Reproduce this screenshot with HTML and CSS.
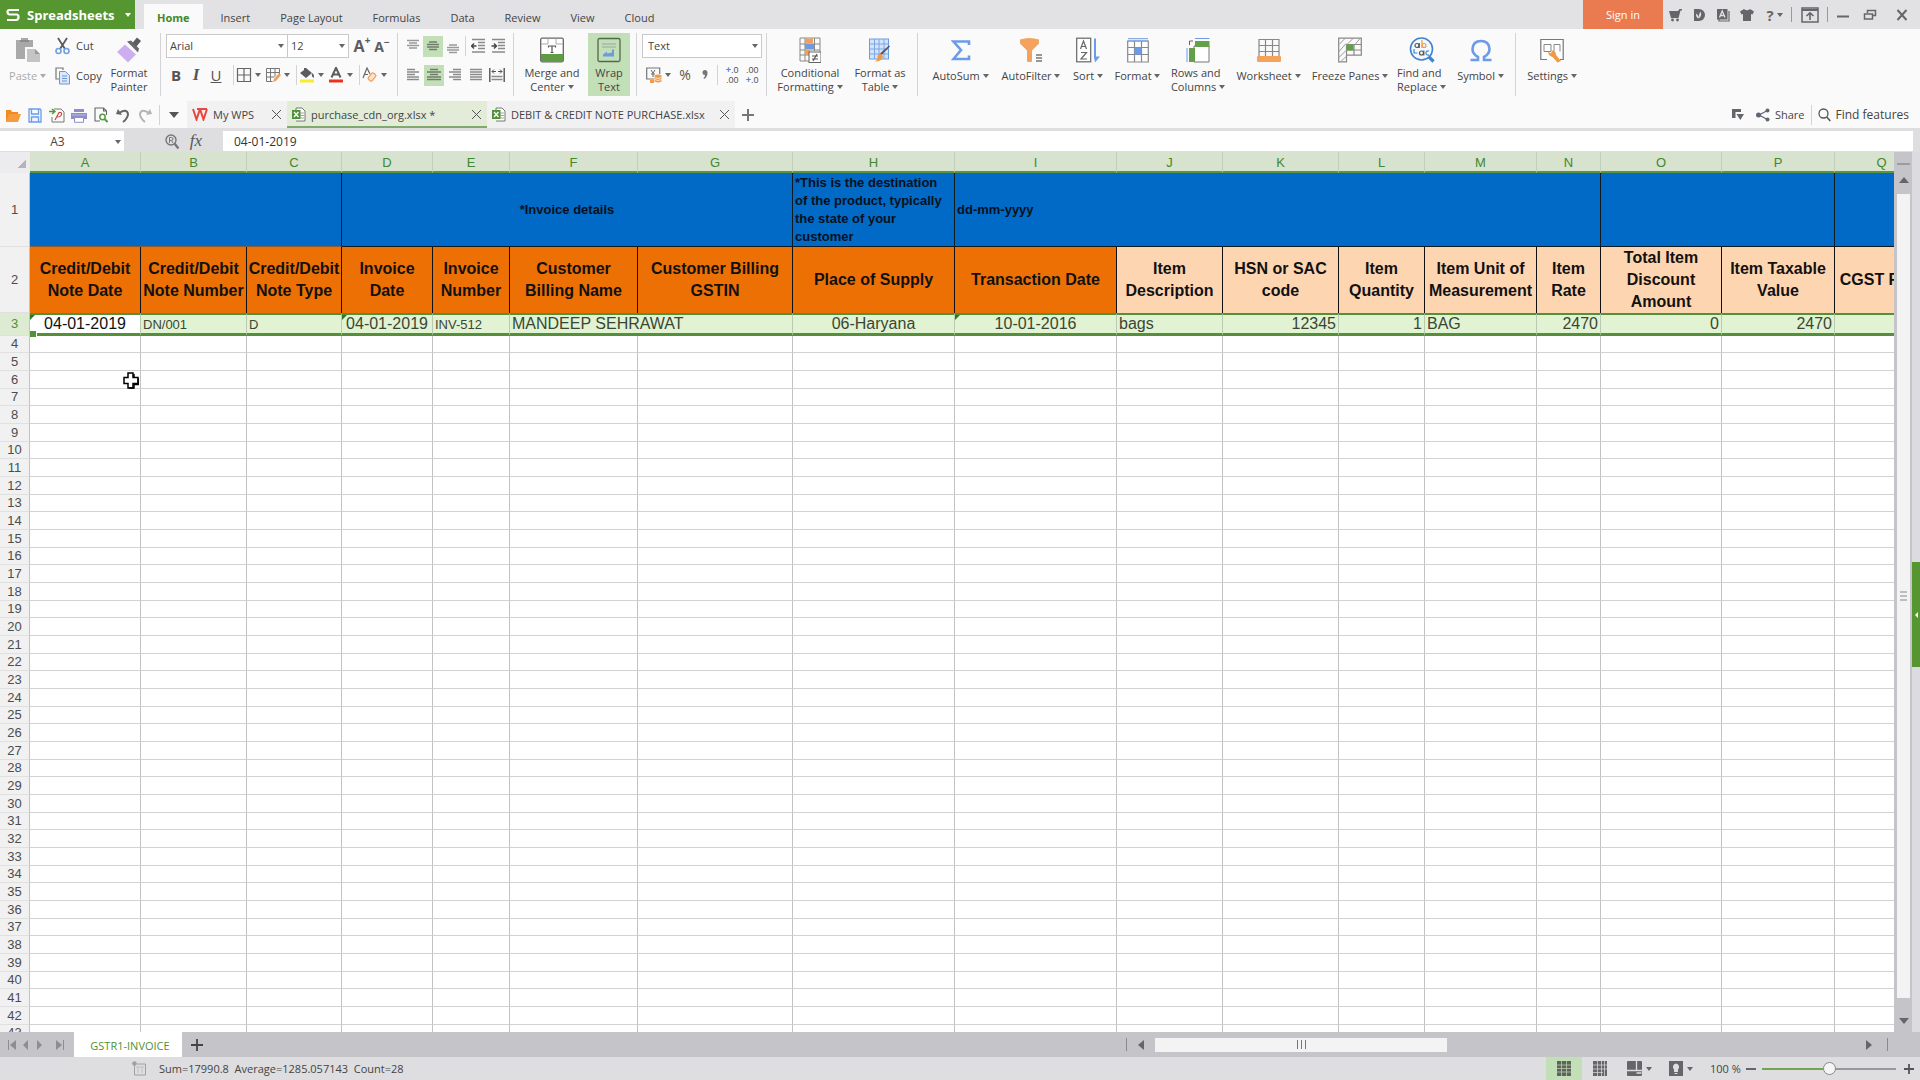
FILE: index.html
```html
<!DOCTYPE html>
<html lang="en">
<head>
<meta charset="utf-8">
<title>purchase_cdn_org.xlsx - Spreadsheets</title>
<link rel="stylesheet" href="styles.css">
</head>
<body>
<header class="titlebar">
  <button class="app-menu"><svg width="14" height="14" viewBox="0 0 14 14"><path d="M13 2H3.500Q1.500 2 1.500 4T3.500 6.500H10.500Q12.500 6.500 12.500 9T10.500 12H1" fill="none" stroke="#fff" stroke-width="2.200"/></svg><span>Spreadsheets</span><i class="caret"></i></button>
  <nav class="menu">
    <button class="menu-tab active">Home</button><button class="menu-tab">Insert</button><button class="menu-tab">Page Layout</button><button class="menu-tab">Formulas</button><button class="menu-tab">Data</button><button class="menu-tab">Review</button><button class="menu-tab">View</button><button class="menu-tab">Cloud</button>
  </nav>
  <div class="window-tools">
    <button class="signin">Sign in</button>
    <button class="wt" aria-label="Store"><svg width="14" height="14" viewBox="0 0 14 14" fill="#66666a"><path d="M1 3h9l1.500-2H14v1.500h-1.500L10.500 10H3z"/><circle cx="4.500" cy="12" r="1.400"/><circle cx="9.500" cy="12" r="1.400"/></svg></button>
    <button class="wt" aria-label="Docer"><svg width="14" height="14" viewBox="0 0 14 14"><path d="M2 1h5a6 6 0 0 1 0 12H2z" fill="#66666a"/><path d="M6.500 10.500C3.500 9 4 6 4.500 5.500Q6.500 7 6.500 10.500C7 8 7 5 8.500 3.500Q10.500 8 6.500 10.500" fill="#e2e2e4"/></svg></button>
    <button class="wt" aria-label="Templates"><svg width="14" height="14" viewBox="0 0 14 14"><path d="M3 3v10h10V3" fill="none" stroke="#66666a" stroke-width="1.200"/><rect x="1" y="1" width="10.500" height="10.500" fill="#66666a"/><path d="M3.500 9.500L6.200 3l2.800 6.500M4.500 7.500h3.500" stroke="#e2e2e4" stroke-width="1.300" fill="none"/></svg></button>
    <button class="wt" aria-label="Skins"><svg width="14" height="14" viewBox="0 0 14 14" fill="#66666a"><path d="M4 1q3 2.500 6 0l4 2.500-1.500 3L11 6v7H3V6l-1.500.5L0 3.500z"/></svg></button>
    <button class="wt help" aria-label="Help"><b>?</b><i class="caret"></i></button>
    <i class="tsep"></i>
    <button class="wt wide" aria-label="Hide ribbon"><svg width="18" height="16" viewBox="0 0 18 16"><rect x="1" y="1" width="16" height="14" fill="none" stroke="#66666a" stroke-width="1.500"/><path d="M1 3h16" stroke="#66666a" stroke-width="2"/><path d="M9 13V6M5.500 9L9 5.800 12.500 9" fill="none" stroke="#66666a" stroke-width="1.600"/></svg></button>
    <i class="tsep"></i>
    <button class="wt win" aria-label="Minimize"><svg width="14" height="14" viewBox="0 0 14 14"><path d="M1 8.500h12" stroke="#66666a" stroke-width="2"/></svg></button>
    <button class="wt win" aria-label="Restore"><svg width="14" height="14" viewBox="0 0 14 14"><path d="M4.500 5V2.500h8v5H10" fill="none" stroke="#66666a" stroke-width="1.500"/><rect x="1.500" y="6" width="8" height="5" fill="none" stroke="#66666a" stroke-width="1.500"/></svg></button>
    <button class="wt win last" aria-label="Close"><svg width="12" height="12" viewBox="0 0 12 12"><path d="M1.500 1l9 10M10.500 1l-9 10" stroke="#66666a" stroke-width="2"/></svg></button>
  </div>
</header>

<section class="ribbon" aria-label="Home ribbon">
  <div class="group clip">
    <button class="big single w-paste off"><svg width="26" height="26" viewBox="0 0 26 26"><path d="M1 3h5V1h7v2h5v7H10v12H1z" fill="#a9a9a9"/><path d="M5 4h9" stroke="#8c8c8c" stroke-width="2"/><path d="M12 12h8l5 5v8H12z" fill="#c4c4c4"/><path d="M20 12v5h5" fill="#9a9a9a"/></svg><span>Paste <i class="caret"></i></span></button>
    <div class="pair">
      <button><svg width="15" height="18" viewBox="0 0 15 18"><path d="M3 1l7 11M12 1L5 12" stroke="#5a5a5e" stroke-width="1.800"/><circle cx="3.500" cy="14" r="2.500" fill="none" stroke="#6fa0e0" stroke-width="1.600"/><circle cx="11.500" cy="14" r="2.500" fill="none" stroke="#6fa0e0" stroke-width="1.600"/></svg><span>Cut</span></button>
      <button><svg width="15" height="18" viewBox="0 0 15 18"><path d="M4 12H1V1h7v2" fill="none" stroke="#777" stroke-width="1.200"/><path d="M4.500 4.500h6l4 4V17h-10z" fill="#dce8fa" stroke="#6b96d8"/><path d="M7 9h5M7 11.500h5M7 14h5" stroke="#6b96d8" stroke-width="1.200"/></svg><span>Copy</span></button>
    </div>
    <button class="big w-painter"><svg width="24" height="25" viewBox="0 0 24 25"><path d="M15 6l5-6 4 3.500-5 6z" fill="#5c5c60"/><path d="M10 4l4-1 8 8-1 4z" fill="#68686c"/><path d="M8 7l11 10-8 8Q5 19 0 14.500z" fill="#cdaef0"/></svg><span>Format<br>Painter</span></button>
  </div>
  <div class="group font">
    <div class="line">
      <label class="combo family"><select aria-label="Font"><option>Arial</option></select><i class="caret"></i></label><label class="combo size"><select aria-label="Font size"><option>12</option></select><i class="caret"></i></label>
      <button class="grow" aria-label="Increase font size">A<sup>+</sup></button><button class="grow small" aria-label="Decrease font size">A<sup>−</sup></button>
    </div>
    <div class="line">
      <button class="ib"><b>B</b></button><button class="ib"><em>I</em></button><button class="ib"><u>U</u></button><i class="sep first"></i>
      <button class="ic" aria-label="Borders"><svg width="16" height="16" viewBox="0 0 16 16"><path d="M1.500 1.500h13v13h-13zM8 1.500v13M1.500 8h13" fill="none" stroke="#666" stroke-width="1.200"/></svg><i class="caret"></i></button>
      <button class="ic" aria-label="Draw borders"><svg width="16" height="16" viewBox="0 0 16 16"><path d="M1.500 14.500v-13h13v6M5.500 1.500v13M10 1.500v8M1.500 5.500h13M1.500 10h8M1.500 14.500h6" fill="none" stroke="#777"/><path d="M8 15l1-3 5-6 2 2-5 6z" fill="#f0a05a"/></svg><i class="caret"></i></button><i class="sep"></i>
      <button class="ic" aria-label="Fill color"><svg width="16" height="16" viewBox="0 0 16 16"><path d="M5 4V1h2l6 5-6 5-6-5 4-3" fill="#5c5c60"/><path d="M13 6q3 2 1.500 5Q12 9 13 6" fill="#5c5c60"/><rect x="1" y="12.500" width="14" height="3" fill="#f7ec2f"/></svg><i class="caret"></i></button>
      <button class="ic" aria-label="Font color"><svg width="16" height="16" viewBox="0 0 16 16"><path d="M3.500 10.500L8 .8l4.500 9.700M5 7.500h6" fill="none" stroke="#5c5c60" stroke-width="2"/><rect x="1" y="12.500" width="14" height="3" fill="#ea3223"/></svg><i class="caret"></i></button><i class="sep"></i>
      <button class="ic" aria-label="Clear"><svg width="16" height="16" viewBox="0 0 16 16"><path d="M1 11L5 1l3 6M2.500 7.500H6" fill="none" stroke="#666" stroke-width="1.200"/><rect x="-2.500" y="-4" width="5" height="8" rx="1.500" transform="translate(10 10) rotate(40)" fill="#fbe3cc" stroke="#f0a05a" stroke-width="1.200"/></svg><i class="caret"></i></button>
    </div>
  </div>
  <div class="group align">
    <div class="line">
      <button class="ib" aria-label="Top"><svg width="12" height="16" viewBox="0 0 12 16"><path d="M0 2.500h12M2 5h8M0 7.500h12M2 10h8" stroke="#9a9a9e" stroke-width="1.600"/></svg></button><button class="ib on" aria-label="Middle"><svg width="12" height="16" viewBox="0 0 12 16"><path d="M2 4h8M0 6.500h12M0 9h12M2 11.500h8" stroke="#6f7d6a" stroke-width="1.600"/></svg></button><button class="ib" aria-label="Bottom"><svg width="12" height="16" viewBox="0 0 12 16"><path d="M2 7h8M0 9.500h12M0 12h12M2 14.500h8" stroke="#9a9a9e" stroke-width="1.600"/></svg></button><i class="sep"></i><button class="ib" aria-label="Decrease indent"><svg width="14" height="16" viewBox="0 0 14 16"><path d="M1 1.500h13M7 4.500h7M7 7.500h7M7 10.500h7M1 14h13" stroke="#8a8a8e" stroke-width="1.400"/><path d="M3 5.500L.5 8 3 10.500M.5 8h5" fill="none" stroke="#444" stroke-width="1.400"/></svg></button><button class="ib" aria-label="Increase indent"><svg width="14" height="16" viewBox="0 0 14 16"><path d="M1 1.500h13M7 4.500h7M7 7.500h7M7 10.500h7M1 14h13" stroke="#8a8a8e" stroke-width="1.400"/><path d="M3 5.500L5.500 8 3 10.500M5.500 8h-5" fill="none" stroke="#444" stroke-width="1.400"/></svg></button>
    </div>
    <div class="line spaced">
      <button class="ib" aria-label="Left"><svg width="12" height="14" viewBox="0 0 12 14"><path d="M0 1.500h8M0 4h12M0 6.500h8M0 9h12M0 11.500h12" stroke="#8a8a8e" stroke-width="1.400"/></svg></button><button class="ib on" aria-label="Center"><svg width="14" height="14" viewBox="0 0 14 14"><path d="M3 1.500h8M0 4h14M3 6.500h8M0 9h14M0 11.500h14" stroke="#6f7d6a" stroke-width="1.400"/></svg></button><button class="ib" aria-label="Right"><svg width="12" height="14" viewBox="0 0 12 14"><path d="M4 1.500h8M0 4h12M4 6.500h8M0 9h12M4 11.500h8" stroke="#8a8a8e" stroke-width="1.400"/></svg></button><button class="ib" aria-label="Justify"><svg width="12" height="14" viewBox="0 0 12 14"><path d="M0 1.500h12M0 4h12M0 6.500h12M0 9h12M0 11.500h12" stroke="#8a8a8e" stroke-width="1.400"/></svg></button><button class="ib" aria-label="Distribute"><svg width="16" height="14" viewBox="0 0 16 14"><path d="M.8 0v14M15.200 0v14" stroke="#555" stroke-width="1.400"/><path d="M3 3.500h4M9 3.500h4M5 1.500L3 3.500l2 2M11 1.500l2 2-2 2" fill="none" stroke="#555"/><path d="M2.500 8.500h11M2.500 11.500h11" stroke="#8a8a8e" stroke-width="1.400"/></svg></button>
    </div>
  </div>
  <div class="group merge">
    <button class="big w-merge"><svg width="24" height="25" viewBox="0 0 24 25"><rect x=".7" y=".7" width="22.600" height="23.600" rx="1.500" fill="#fff" stroke="#666" stroke-width="1.300"/><path d="M1 6.500h7M16 6.500h7M8 1v5.500M16 1v5.500" stroke="#aaa"/><path d="M8.500 10V8.500h7V10M12 8.500v6.500M10.500 15h3" fill="none" stroke="#555" stroke-width="1.200"/><rect x="1" y="16.500" width="22" height="7.500" fill="#5f9a45"/></svg><span>Merge and<br>Center <i class="caret"></i></span></button>
    <button class="big w-wrap on"><svg width="24" height="25" viewBox="0 0 24 25"><rect x="1" y="1" width="22" height="23" rx="1.500" fill="none" stroke="#4f6a4b" stroke-width="1.300"/><path d="M5 6.500h14M5 9.500h14" stroke="#9aa898" stroke-width="1.200"/><path d="M6 19v-2l4-3v2l5-1v-3h2v7z" fill="#6c9ce0"/></svg><span>Wrap<br>Text</span></button>
  </div>
  <div class="group number">
    <div class="line"><label class="combo format"><select aria-label="Number format"><option>Text</option></select><i class="caret"></i></label></div>
    <div class="line">
      <button class="ic money" aria-label="Currency"><svg width="16" height="17" viewBox="0 0 16 17"><path d="M8 12H.7V1h13v6" fill="none" stroke="#777" stroke-width="1.200"/><path d="M5 3l2 3 2-3M7 6v4M5 7h4" fill="none" stroke="#666"/><path d="M8.500 8.500q3.500-2 7 0v6q-3.500 2-7 0zM4 13h4v3H4z" fill="#f19a45"/><path d="M8.500 10.500q3.500 2 7 0M8.500 12.500q3.500 2 7 0" fill="none" stroke="#fff" stroke-width=".7"/></svg><i class="caret"></i></button><button class="ib pct">%</button><button class="ib" aria-label="Comma style"><svg width="6" height="10" viewBox="0 0 6 10"><path d="M3 0a2.500 2.500 0 0 1 2.500 3Q5.500 7 2 9l-.5-1Q3 7 3 5A2.500 2.500 0 0 1 3 0" fill="#77777b"/></svg></button><i class="sep"></i><button class="ib dec"><span><i>+</i>.0</span><span>.00</span></button><button class="ib dec"><span>.00</span><span><i>+</i>.0</span></button>
    </div>
  </div>
  <div class="group styles">
    <button class="big w-cond"><svg width="22" height="26" viewBox="0 0 22 26"><path d="M1 24V1h20v14M1 7h20M1 13h20M1 18h9M6 1v23M15.500 1v13M1 24h9" fill="none" stroke="#888"/><rect x="6" y="1.500" width="8" height="5" fill="#f0a05a"/><rect x="6" y="7" width="9" height="5" fill="#6c9ce0"/><rect x="6" y="13" width="5" height="5" fill="#f0a05a"/><rect x="10" y="15" width="12" height="10.500" fill="#fff" stroke="#666"/><path d="M13 19h6M13 22h6M18 17l-4 7" stroke="#555" stroke-width="1.200"/></svg><span>Conditional<br>Formatting <i class="caret"></i></span></button>
    <button class="big w-table"><svg width="22" height="25" viewBox="0 0 22 25"><rect x=".5" y="1.500" width="19" height="20" fill="#d3e3fa" stroke="#6c9ce0"/><path d="M.5 6.500h19M.5 11.500h19M.5 16.500h19M5.500 1.500v20M10 1.500v20M15 1.500v20" stroke="#7ba6e4"/><path d="M21 9l-9 9-1-2 9-8z" fill="#555"/><path d="M12 16l2 3q-1 5-8 5 3-2 2.500-4.500T12 16" fill="#f19a45"/></svg><span>Format as<br>Table <i class="caret"></i></span></button>
  </div>
  <div class="group tools">
    <button class="big single w-69"><svg width="20" height="25" viewBox="0 0 20 25"><path d="M18 7.500V4H2.500l7.500 8.500-7.500 9H18V18" fill="none" stroke="#6c9ce8" stroke-width="2.600"/></svg><span>AutoSum <i class="caret"></i></span></button>
    <button class="big single w-72"><svg width="24" height="25" viewBox="0 0 24 25"><path d="M1 2q9-3 19 0v4l-7 7v11q-3 1-5 0V13L1 6z" fill="#f5a25d"/><path d="M17 17.500h6M17 20.500h6M17 23.500h6" stroke="#777" stroke-width="1.300"/></svg><span>AutoFilter <i class="caret"></i></span></button>
    <button class="big single w-42"><svg width="24" height="25" viewBox="0 0 24 25"><rect x=".7" y=".7" width="14" height="23.600" fill="#fff" stroke="#666" stroke-width="1.200"/><path d="M4.500 11.500l3-8 3 8M5.500 9h4M5 15h5.500L5 21.500h6" fill="none" stroke="#666" stroke-width="1.200"/><path d="M19 1v20" stroke="#6c9ce8" stroke-width="2"/><path d="M18 19h6l-5 6z" fill="#6c9ce8"/></svg><span>Sort <i class="caret"></i></span></button>
    <button class="big single w-57"><svg width="22" height="25" viewBox="0 0 22 25"><path d="M.7 3.500h20.600v21H.7zM.7 10h20.600M.7 17h20.600M7.500 3.500v21M14.500 3.500v21" fill="#fff" stroke="#888" stroke-width="1.200"/><path d="M1 1.200h20M1 3.500h20" stroke="#6c9ce8"/><rect x="7.500" y="10" width="7" height="7" fill="#6c9ce8"/></svg><span>Format <i class="caret"></i></span></button>
    <button class="big w-64"><svg width="24" height="26" viewBox="0 0 24 26"><path d="M8 9h15v16H8z" fill="#fff" stroke="#777"/><rect x="9" y="4" width="14.500" height="6" fill="#649f49"/><rect x="3" y="11" width="6" height="14" fill="#649f49"/><path d="M9 1.500h14.500M1 11v14" stroke="#6c9ce8"/><path d="M3.500 8V4H7" fill="none" stroke="#666"/></svg><span class="left">Rows and<br>Columns <i class="caret"></i></span></button>
    <button class="big single w-77"><svg width="24" height="25" viewBox="0 0 24 25"><path d="M2 20V2h20v18M2 8h20M2 14h20M8.500 2v18M15.500 2v18" fill="none" stroke="#888" stroke-width="1.200"/><rect y="18.500" width="24" height="6" rx="1" fill="#f5a25d"/></svg><span>Worksheet <i class="caret"></i></span></button>
    <button class="big single w-86"><svg width="24" height="25" viewBox="0 0 24 25"><path d="M.7 24.300V.7h22.600v17H8.500v6.600zM8.500 7h15M8.500 12.500h15M8.500 7v11M16 7v11" fill="none" stroke="#888" stroke-width="1.200"/><path d="M1 7l6-6M1 14l7-8M1 20l7-7M3 24l5-5M9 7l6-6M17 7l5-6" stroke="#999"/><rect x="8.500" y="7" width="7" height="6" fill="#649f49"/></svg><span>Freeze Panes <i class="caret"></i></span></button>
    <button class="big w-57"><svg width="26" height="26" viewBox="0 0 26 26"><circle cx="12.500" cy="12" r="11" fill="#f4f9ff" stroke="#3f83d0" stroke-width="1.600"/><path d="M20 20l4.500 4.500" stroke="#3f83d0" stroke-width="3.200"/><g fill="none" stroke-width="1.200"><circle cx="8" cy="8.500" r="2" stroke="#555"/><path d="M10.200 6v5" stroke="#555"/><path d="M13 3v8" stroke="#f19a45"/><circle cx="15" cy="8.500" r="2" stroke="#f19a45"/><circle cx="12.500" cy="16" r="2" stroke="#555"/><path d="M14.800 13.500v5" stroke="#555"/><path d="M20 14a2.200 2.200 0 1 0 0 4" stroke="#3f83d0"/><path d="M5 12v4h3.500" stroke="#3f83d0"/></g></svg><span class="left">Find and<br>Replace <i class="caret"></i></span></button>
    <button class="big single w-61"><svg width="24" height="25" viewBox="0 0 24 25"><path d="M1.500 22.500H9v-3Q3.500 16.500 3.500 11.500 4 3.500 12 3.500t8.500 8q0 5-5.500 8v3h7.500" fill="none" stroke="#6c9ce8" stroke-width="2.600"/></svg><span>Symbol <i class="caret"></i></span></button>
  </div>
  <div class="group settings">
    <button class="big single w-72"><svg width="24" height="25" viewBox="0 0 24 25"><path d="M7 22H.8V2h22.400v20H20" fill="#fff" stroke="#777" stroke-width="1.200"/><path d="M4 7h7v7H4zM14 14V7h6v7" fill="none" stroke="#888"/><path d="M8 14l3 2 1-3q4 0 4 4.500l5 6-3.500 1.500-5-5.500q-4-1-4.500-5.500" fill="#f19a45"/></svg><span>Settings <i class="caret"></i></span></button>
  </div>
</section>

<div class="docbar">
  <div class="quick">
    <button aria-label="Open"><svg width="16" height="15" viewBox="0 0 16 15"><path d="M1 14V2h5l1 2h6v2" fill="#f08a24"/><path d="M1 14L4 6h12l-3 8z" fill="#f59c3d"/></svg></button>
    <button aria-label="Save"><svg width="14" height="15" viewBox="0 0 14 15"><path d="M1 1h11l1 1v12H1zM3.500 1v5h7V1M3.500 14V9h7v5" fill="#eef5ff" stroke="#6c9ce8" stroke-width="1.300"/></svg></button>
    <button aria-label="Export PDF"><svg width="16" height="15" viewBox="0 0 16 15"><path d="M5 1h7l3 3v10H3V9" fill="none" stroke="#777"/><path d="M0 3.500h5M3 1l3 2.500L3 6" stroke="#4f9a35" stroke-width="1.400" fill="none"/><path d="M6 12l4-7.500q3-.5 2.500 2T8 9" fill="none" stroke="#d5473b" stroke-width="1.200"/></svg></button>
    <button aria-label="Print"><svg width="16" height="15" viewBox="0 0 16 15"><path d="M3 1h10v3H3zM0 5h16v6H0z" fill="#8d8fcb"/><path d="M3.500 9.500h9v4.800h-9z" fill="#fff" stroke="#8d8fcb"/><path d="M1 7h14" stroke="#b9bae2"/></svg></button>
    <button aria-label="Print preview"><svg width="14" height="16" viewBox="0 0 14 16"><path d="M12.500 8V4l-3-3H1v13h5M9.500 1v3h3" fill="none" stroke="#666" stroke-width="1.100"/><circle cx="8.500" cy="10" r="2.700" fill="#fff" stroke="#5b9a45" stroke-width="1.500"/><path d="M10.500 12l3 3" stroke="#5b9a45" stroke-width="2"/></svg></button>
    <button aria-label="Undo"><svg width="14" height="15" viewBox="0 0 14 15"><path d="M3 5q8-5 9 1 0 4-5 8" fill="none" stroke="#66666a" stroke-width="2"/><path d="M0 6l2-5 4 6z" fill="#66666a"/></svg></button>
    <button aria-label="Redo"><svg width="14" height="15" viewBox="0 0 14 15"><path d="M11 5q-8-5-9 1 0 4 5 8" fill="none" stroke="#b4b4b8" stroke-width="2"/><path d="M14 6l-2-5-4 6z" fill="#b4b4b8"/></svg></button>
    <i class="sep"></i>
    <button aria-label="More"><i class="caret large"></i></button>
  </div>
  <div class="doctabs">
    <div class="doctab wps"><a href="#"><svg width="16" height="13" viewBox="0 0 16 13"><path d="M1 1l3.500 10.500L8 1l3.500 10.500L15 1M5 1h10" fill="none" stroke="#e8473c" stroke-width="2"/></svg><span>My WPS</span></a><button class="close" aria-label="Close My WPS"></button></div>
    <div class="doctab current"><a href="#"><svg width="14" height="15" viewBox="0 0 14 15"><path d="M4 3V1h6l3 3v10H4" fill="#fff" stroke="#777"/><path d="M7 6h5M7 8.500h5M7 11h5" stroke="#9ab38e"/><rect y="3" width="8.500" height="9" fill="#4f9138"/><path d="M2 5l4.500 5M6.500 5L2 10" stroke="#fff" stroke-width="1.300"/></svg><span>purchase_cdn_org.xlsx *</span></a><button class="close" aria-label="Close purchase_cdn_org.xlsx"></button></div>
    <div class="doctab debit"><a href="#"><svg width="14" height="15" viewBox="0 0 14 15"><path d="M4 3V1h6l3 3v10H4" fill="#fff" stroke="#777"/><path d="M7 6h5M7 8.500h5M7 11h5" stroke="#9ab38e"/><rect y="3" width="8.500" height="9" fill="#4f9138"/><path d="M2 5l4.500 5M6.500 5L2 10" stroke="#fff" stroke-width="1.300"/></svg><span>DEBIT &amp; CREDIT NOTE PURCHASE.xlsx</span></a><button class="close" aria-label="Close DEBIT &amp; CREDIT NOTE PURCHASE.xlsx"></button></div>
    <button class="newdoc" aria-label="New document"><svg width="12" height="12" viewBox="0 0 12 12"><path d="M6 0v12M0 6h12" stroke="#77777b" stroke-width="2"/></svg></button>
  </div>
  <div class="doctools">
    <button aria-label="Window list"><svg width="12" height="11" viewBox="0 0 12 11"><path d="M0 0h9v3H3.500v6H0z" fill="#66666a"/><path d="M4.500 5H12l-3.700 6z" fill="#66666a"/></svg></button>
    <button><svg width="14" height="14" viewBox="0 0 14 14" fill="#5d6673"><path d="M11.500 2.500L3 7l8.500 4.500" fill="none" stroke="#5d6673" stroke-width="1.200"/><circle cx="11.500" cy="2.500" r="2"/><circle cx="2.500" cy="7" r="2.500"/><circle cx="11.500" cy="11.500" r="2"/></svg><span>Share</span></button>
    <i class="sep"></i>
    <button class="find"><svg width="13" height="14" viewBox="0 0 13 14"><circle cx="5.500" cy="5.500" r="4.500" fill="none" stroke="#555" stroke-width="1.300"/><path d="M8.800 9l3.500 4" stroke="#555" stroke-width="1.600"/></svg><span>Find features</span></button>
  </div>
</div>

<div class="formulabar">
  <label class="namebox"><input value="A3" aria-label="Name box"><i class="caret"></i></label>
  <div class="fx">
    <button aria-label="Browse"><svg width="14" height="15" viewBox="0 0 14 15"><circle cx="6" cy="6" r="5" fill="none" stroke="#77777b" stroke-width="1.400"/><path d="M4.500 9V3.500h2q1.500 0 1.500 1.500T6.500 6.500h-2M6.500 6.500L8 9" fill="none" stroke="#77777b"/><path d="M9.500 9.500l4 5" stroke="#77777b" stroke-width="2.400"/></svg></button>
    <button class="fn" aria-label="Insert function"><em>fx</em></button>
  </div>
  <input class="formula" value="04-01-2019" aria-label="Formula">
</div>

<main class="workspace">
  <div class="sheet">
    <table>
      <colgroup><col class="c-h"><col class="c-a"><col class="c-b"><col class="c-c"><col class="c-d"><col class="c-e"><col class="c-f"><col class="c-g"><col class="c-hh"><col class="c-i"><col class="c-j"><col class="c-k"><col class="c-l"><col class="c-m"><col class="c-n"><col class="c-o"><col class="c-p"><col class="c-q"></colgroup>
      <thead><tr><th class="corner"></th><th>A</th><th>B</th><th>C</th><th>D</th><th>E</th><th>F</th><th>G</th><th>H</th><th>I</th><th>J</th><th>K</th><th>L</th><th>M</th><th>N</th><th>O</th><th>P</th><th>Q</th></tr></thead>
      <tbody id="rows">
        <tr class="notes"><th>1</th><td colspan="3"></td><td colspan="4" class="mid">*Invoice details</td><td>*This is the destination of the product, typically the state of your customer</td><td colspan="6">dd-mm-yyyy</td><td colspan="2"></td><td></td></tr>
        <tr class="fields"><th>2</th><td>Credit/Debit Note Date</td><td>Credit/Debit Note Number</td><td>Credit/Debit Note Type</td><td>Invoice Date</td><td>Invoice Number</td><td>Customer Billing Name</td><td>Customer Billing GSTIN</td><td>Place of Supply</td><td>Transaction Date</td><td class="item">Item Description</td><td class="item">HSN or SAC code</td><td class="item">Item Quantity</td><td class="item">Item Unit of Measurement</td><td class="item">Item Rate</td><td class="item">Total Item Discount Amount</td><td class="item">Item Taxable Value</td><td class="item">CGST Rate</td></tr>
        <tr class="selected"><th>3</th><td class="mid mark cell-active">04-01-2019</td><td class="sm">DN/001</td><td class="sm">D</td><td class="mid mark">04-01-2019</td><td class="sm">INV-512</td><td colspan="2">MANDEEP SEHRAWAT</td><td class="mid">06-Haryana</td><td class="mid mark">10-01-2016</td><td>bags</td><td class="num">12345</td><td class="num">1</td><td>BAG</td><td class="num">2470</td><td class="num">0</td><td class="num">2470</td><td></td></tr>
      </tbody>
    </table>
    <svg class="pointer" width="16" height="17" viewBox="0 0 16 17"><path d="M5 1h5v4.500h5v6h-5V16H5v-4.500H1v-6h4z" fill="#fff" stroke="#000" stroke-width="1.500"/><path d="M11 2v3M15.200 6.500v6H11V16H6" fill="none" stroke="#000" stroke-width="1.500"/></svg>
  </div>
  <div class="vscroll"><i class="split"></i><button class="arrow up" aria-label="Scroll up"></button><div class="vthumb"><i></i><i></i><i></i></div><button class="arrow down" aria-label="Scroll down"></button></div>
  <div class="sidepane"><button aria-label="Open side pane"></button></div>
</main>

<div class="sheetbar">
  <div class="sheetnav">
    <button aria-label="First sheet"><svg width="8" height="10" viewBox="0 0 8 10"><path d="M.5 0v10" stroke="#8e8e92"/><path d="M8 0v10L2 5z" fill="#8e8e92"/></svg></button><button aria-label="Previous sheet"><svg width="6" height="10" viewBox="0 0 6 10"><path d="M5 0v10L0 5z" fill="#8e8e92"/></svg></button><button aria-label="Next sheet"><svg width="6" height="10" viewBox="0 0 6 10"><path d="M0 0v10l5-5z" fill="#8e8e92"/></svg></button><button aria-label="Last sheet"><svg width="8" height="10" viewBox="0 0 8 10"><path d="M7.500 0v10" stroke="#8e8e92"/><path d="M0 0v10l6-5z" fill="#8e8e92"/></svg></button>
  </div>
  <button class="sheettab">GSTR1-INVOICE</button>
  <button class="addsheet" aria-label="Add sheet"><svg width="12" height="12" viewBox="0 0 12 12"><path d="M6 0v12M0 6h12" stroke="#444" stroke-width="1.800"/></svg></button>
  <div class="hscroll"><i class="bar"></i><button class="arrow prev" aria-label="Scroll left"></button><div class="track"><div class="hthumb"><i></i><i></i><i></i></div></div><button class="arrow next" aria-label="Scroll right"></button><i class="bar"></i></div>
</div>

<footer class="status">
  <svg width="15" height="15" viewBox="0 0 15 15"><path d="M2.500 4v10h11V3H5" fill="none" stroke="#a0a0a4"/><path d="M6 6v6M10 6v6M4 6h8" stroke="#c0c0c4"/><circle cx="2.500" cy="2.500" r="2.300" fill="#a0a0a4"/></svg>
  <span class="sums">Sum=17990.8&nbsp; Average=1285.057143&nbsp; Count=28</span>
  <div class="views">
    <button class="on" aria-label="Normal view"><svg width="14" height="15" viewBox="0 0 14 15"><rect width="14" height="15" fill="#5d655b"/><path d="M0 4h14M0 7.500h14M0 11h14M4.500 0v15M9.500 0v15" stroke="#c3dbb8" stroke-width=".7"/></svg></button>
    <button aria-label="Page break view"><svg width="14" height="15" viewBox="0 0 14 15"><rect width="14" height="15" fill="#66666a"/><path d="M0 4h14M0 8h14M0 11.500h10M4.500 0v15M8.500 0v15M11.500 0v15" stroke="#dedee0" stroke-width=".7"/></svg></button>
    <button class="more" aria-label="Reading view"><svg width="15" height="15" viewBox="0 0 15 15"><rect width="15" height="15" rx="1" fill="#66666a"/><path d="M0 9.500h15M9.500 0v9.500M9.500 12h5" stroke="#dedee0" stroke-width="1.300"/></svg><i class="caret"></i></button>
    <button class="more" aria-label="Eye protection"><svg width="14" height="15" viewBox="0 0 14 15"><rect width="14" height="15" fill="#66666a"/><path d="M7 2.500a3.500 3.500 0 0 1 2 6V11H5V8.500a3.500 3.500 0 0 1 2-6M5.500 12h3v1h-3z" fill="#dedee0"/></svg><i class="caret"></i></button>
  </div>
  <label class="zoom"><span>100 %</span><button aria-label="Zoom out"><svg width="10" height="10" viewBox="0 0 10 10"><path d="M0 5h10" stroke="#66666a" stroke-width="2"/></svg></button><input type="range" min="0" max="200" value="100" aria-label="Zoom"><button aria-label="Zoom in"><svg width="10" height="10" viewBox="0 0 10 10"><path d="M0 5h10M5 0v10" stroke="#55555a" stroke-width="1.800"/></svg></button></label>
</footer>
<script src="rows.js"></script>
</body>
</html>
```
FILE: rows.js
```js
// Fill the sheet below the data with empty numbered rows.
const body = document.getElementById('rows');
for (let n = 4; n <= 80; n++) {
  const row = body.insertRow();
  const head = document.createElement('th');
  head.textContent = n;
  row.appendChild(head);
  for (let c = 0; c < 17; c++) row.insertCell();
}
```
FILE: styles.css
```css
* { box-sizing: border-box; }
html, body { height: 100%; }
body {
  margin: 0;
  display: flex;
  flex-direction: column;
  overflow: hidden;
  background: #fafafa;
  color: #444;
  font: 11px/14px "Open Sans", "Noto Sans", sans-serif;
}
button, input, select { font: inherit; color: inherit; border: 0; padding: 0; margin: 0; background: none; border-radius: 0; outline: 0; }
button { display: flex; align-items: center; justify-content: center; white-space: nowrap; }
svg { flex: none; display: block; }
a { color: inherit; text-decoration: none; }
.caret { display: inline-block; flex: none; width: 0; height: 0; border: 3px solid transparent; border-top: 4px solid #666; border-bottom: 0; vertical-align: 2px; }
.caret.large { border-width: 6px 5px 0; }

/* Title bar */
.titlebar { display: flex; height: 29px; background: #e2e2e4; flex: none; }
.app-menu { width: 135px; background: #559630; color: #fff; font-size: 13px; font-weight: 700; gap: 7px; justify-content: flex-start; padding-left: 6px; }
.app-menu .caret { border-top-color: #fff; margin-left: auto; margin-right: 4px; }
.menu { display: flex; align-items: flex-end; padding-left: 9px; flex: 1; }
.menu-tab { height: 25px; padding: 2px 15px 0; }
.menu-tab.active { padding: 2px 13px 0; background: #fafafa; color: #3e8a24; font-weight: 700; margin-right: 3px; }
.window-tools { display: flex; align-items: center; }
.signin { width: 80px; height: 29px; background: #ea7b51; color: #fff; }
.wt { width: 24px; height: 29px; }
.help { width: 31px; gap: 3px; font-size: 15px; color: #66666a; }
.wide { width: 33px; }
.win { width: 26px; margin-left: 1px; }
.last { width: 36px; }
.tsep { width: 1px; height: 15px; margin: 0 1px; background: #999; }

/* Ribbon */
.ribbon { display: flex; height: 72px; padding-top: 4px; background: #fafafa; flex: none; }
.group { display: flex; height: 63px; border-right: 1px solid #d4d4d6; flex: none; }
.clip { width: 161px; }
.font, .align, .number { flex-direction: column; gap: 5px; }
.font { width: 237px; padding: 1px 0 0 5px; }
.align { width: 116px; padding: 1px 0 0 5px; }
.merge { width: 123px; padding-left: 4px; gap: 2px; }
.number { width: 130px; padding: 1px 0 0 5px; }
.styles { width: 151px; padding-left: 5px; }
.tools { width: 598px; padding-left: 8px; }
.settings { border: 0; }
.line { display: flex; align-items: center; height: 24px; }
.spaced { gap: 1px; }
.sep { width: 1px; height: 20px; margin: 0 2px; background: #d4d4d6; }
.first { margin-left: 7px; }
.big { flex-direction: column; justify-content: flex-start; padding-top: 4px; gap: 3px; color: #444; }
.big > svg { height: 26px; }
.single > span { margin-top: 3px; }
.left { text-align: left; }
.off { color: #aaa; }
.off .caret { border-top-color: #aaa; }
.on { background: #c3dfb8; }
.w-paste { width: 55px; }
.w-painter { width: 48px; }
.w-merge { width: 68px; }
.w-wrap { width: 42px; }
.w-cond { width: 76px; }
.w-table { width: 64px; }
.w-42 { width: 42px; }
.w-57 { width: 57px; }
.w-61 { width: 61px; }
.w-64 { width: 64px; }
.w-69 { width: 69px; }
.w-72 { width: 72px; }
.w-77 { width: 77px; }
.w-86 { width: 86px; }
.pair { width: 50px; display: flex; flex-direction: column; gap: 8px; padding-top: 2px; }
.pair button { justify-content: flex-start; gap: 6px; height: 22px; }
.combo { display: flex; align-items: center; height: 24px; border: 1px solid #c9c9cb; background: #fff; padding-right: 3px; }
.combo select { appearance: none; flex: 1; min-width: 0; height: 22px; padding-left: 3px; }
.family { width: 122px; }
.size { width: 62px; margin-left: -1px; }
.format { width: 120px; }
.format select { padding-left: 5px; }
.grow { width: 22px; margin-left: 2px; font: 700 16px "Open Sans", sans-serif; color: #5c5c60; align-items: flex-start; }
.grow sup { font-size: 10px; line-height: 10px; }
.grow.small { font-size: 14px; width: 18px; margin-left: 0; }
.ib { width: 20px; height: 21px; font-size: 15px; color: #555; }
.ib em { font-family: "Liberation Serif", serif; font-weight: 700; font-size: 17px; }
.ic { width: 29px; height: 21px; gap: 3px; justify-content: flex-start; }
.money { width: 33px; padding-left: 4px; }
.pct { font-size: 14px; }
.dec { flex-direction: column; font: 9px/10px "Liberation Sans", Arial, sans-serif; }
.dec span { display: block; width: 17px; text-align: right; }
.dec i { color: #4a88e0; font-style: normal; font-weight: 700; }

/* Document tabs */
.docbar { display: flex; height: 27px; background: #fafafa; flex: none; }
.quick { display: flex; align-items: center; padding: 1px 0 0 2px; width: 187px; flex: none; }
.quick button { width: 22px; height: 26px; }
.quick .sep { margin: 0 3px; }
.quick .caret { border-top-color: #555; }
.doctabs { display: flex; flex: 1; min-width: 0; }
.doctab { display: flex; align-items: center; justify-content: space-between; background: #f1f1f2; padding: 0 4px 0 5px; }
.doctab a { display: flex; align-items: center; gap: 5px; white-space: nowrap; }
.wps { width: 100px; }
.current { width: 200px; background: #e2ecd9; border-bottom: 2px solid #82a96d; padding-top: 2px; }
.debit { width: 248px; }
.close { width: 14px; height: 14px; background: linear-gradient(45deg, transparent 47%, #555 47%, #555 53%, transparent 53%) center / 9px 9px no-repeat, linear-gradient(-45deg, transparent 47%, #555 47%, #555 53%, transparent 53%) center / 9px 9px no-repeat; }
.newdoc { width: 26px; }
.doctools { display: flex; align-items: center; padding-right: 11px; }
.doctools button { gap: 5px; }
.doctools button:first-child { margin-right: 12px; }
.doctools .sep { margin: 0 6px; }
.find { font-size: 12px; }

/* Formula bar */
.formulabar { display: flex; height: 24px; padding: 3px 7px 1px 0; background: #dedee0; flex: none; }
.namebox { display: flex; align-items: center; width: 124px; background: #fff; padding: 1px 3px 0 0; }
.namebox input { width: 115px; text-align: center; font-size: 12px; }
.fx { display: flex; width: 99px; padding-left: 36px; }
.fx button { width: 24px; }
.fn { font: 17px "Liberation Serif", serif; color: #55555a; }
.formula { flex: 1; background: #fff; padding: 1px 0 0 11px; font-size: 12px; color: #333; }

/* Sheet */
.workspace { display: flex; flex: 1; min-height: 0; }
.sheet { flex: 1; min-width: 0; overflow: hidden; background: #fff; position: relative; }
table { table-layout: fixed; width: 1929px; border-collapse: separate; border-spacing: 0; font: 16px/18px "Liberation Sans", Arial, sans-serif; color: #111; }
.c-h { width: 30px; } .c-a { width: 111px; } .c-b { width: 106px; } .c-c { width: 95px; }
.c-d { width: 91px; } .c-e { width: 77px; } .c-f { width: 128px; } .c-g { width: 155px; }
.c-hh { width: 162px; } .c-i { width: 162px; } .c-j { width: 106px; } .c-k { width: 116px; }
.c-l { width: 86px; } .c-m { width: 112px; } .c-n { width: 64px; } .c-o { width: 121px; }
.c-p { width: 113px; } .c-q { width: 94px; }
th, td { padding: 0; height: 18px; border-right: 1px solid #c3c3c3; border-bottom: 1px solid #d2d2d2; vertical-align: middle; }
th { font-size: 13px; line-height: 16px; font-weight: 400; color: #4c4c4c; background: #f1f1f2; }
tbody th { border-bottom-color: #e0e0e0; line-height: 14px; }
tbody tr:nth-child(3n+1) > * { height: 17px; }
thead th { height: 21px; padding-top: 2px; background: #d7e3cf; color: #43882a; border-right-color: #c2cfba; border-bottom: 2px solid #5b9440; }
thead .corner { background: linear-gradient(135deg, #ececee 50%, #b5b5b9 50%) 18px 8px / 8px 8px no-repeat #ececee; border-right-color: #ececee; border-bottom-color: #ececee; }
tbody tr.notes > * { height: 74px; }
.notes td { background: #006ac6; border-color: #101820; font: 700 13px/18px "Liberation Sans", Arial, sans-serif; padding: 0 4px 0 2px; color: #081020; }
.notes td:nth-child(2) { border-bottom-color: #8a5a3c; }
.notes .mid { padding: 0; }
tbody tr.fields > * { height: 65px; }
.fields td { background: #ed7004; border-color: #101010; border-bottom: 0; font-weight: 700; line-height: 22px; text-align: center; }
.fields td.item { background: #fed5b1; }
tbody tr.selected > * { height: 23px; }
.selected td { position: relative; background: #e1f3d3; border-top: 2px solid #54903a; border-bottom: 3px solid #54903a; border-right-color: #b9cbae; padding: 0 2px; color: #3a4634; white-space: nowrap; }
.selected th { background: #dcebd2; color: #4f9138; }
.selected .sm { font-size: 13px; line-height: 16px; vertical-align: bottom; }
.mid { text-align: center; }
.num { text-align: right; }
.selected .cell-active { background: #fff; color: #111; }
.mark::before { content: ""; position: absolute; left: 0; top: 0; border-top: 5px solid #2d7a1c; border-right: 5px solid transparent; }
.cell-active::after { content: ""; position: absolute; left: 0; bottom: -4px; width: 6px; height: 6px; background: #54903a; border: 1px solid #fff; border-width: 1px 1px 0 0; }
.pointer { position: absolute; left: 123px; top: 220px; }

/* Scroll bars */
.vscroll { width: 18px; background: #c5c4c9; display: flex; flex-direction: column; align-items: center; padding: 11px 2px 0 3px; }
.split { width: 13px; height: 2px; background: #9c9ca0; }
.arrow { width: 13px; height: 29px; flex: none; }
.arrow::before { content: ""; border: 5px solid transparent; }
.up::before { border-bottom: 6px solid #66666a; border-top: 0; }
.down { height: 22px; }
.down::before { border-top: 6px solid #66666a; border-bottom: 0; }
.vthumb { flex: 1; width: 13px; background: #f3f3f4; display: flex; flex-direction: column; align-items: center; justify-content: center; gap: 2px; margin-bottom: 12px; }
.vthumb i { width: 7px; height: 2px; background: #bdbdc1; }
.sidepane { width: 8px; background: #dcdce0; display: flex; align-items: center; }
.sidepane button { width: 8px; height: 105px; margin-top: 45px; background: #559630; }
.sidepane button::before { content: ""; border: 3px solid transparent; border-right-color: #fff; border-left: 0; }

.sheetbar { display: flex; height: 25px; background: #c5c4c9; flex: none; }
.sheetnav { display: flex; width: 74px; padding-left: 5px; }
.sheetnav button { width: 14px; }
.sheetnav button:last-child { margin-left: 6px; }
.sheettab { width: 108px; background: #fff; color: #4f9138; padding: 2px 0 0 4px; }
.addsheet { width: 30px; }
.hscroll { display: flex; align-items: center; width: 762px; margin: 0 32px 0 auto; }
.bar { width: 1px; height: 13px; background: #8a8a8e; }
.hscroll .arrow { width: 28px; height: 25px; }
.prev::before { border-right: 6px solid #66666a; border-left: 0; }
.hscroll .next { width: 36px; }
.next::before { border-left: 6px solid #66666a; border-right: 0; }
.track { flex: 1; }
.hthumb { width: 42%; height: 14px; background: #f3f3f4; display: flex; align-items: center; justify-content: center; gap: 3px; }
.hthumb i { width: 1px; height: 9px; background: #77777b; }

.status { display: flex; align-items: center; height: 23px; padding: 0 6px 0 132px; background: #dedee0; flex: none; }
.sums { margin-left: 12px; padding-top: 1px; }
.views { display: flex; align-self: stretch; margin-left: auto; }
.views button { width: 36px; }
.views .more { width: 42px; gap: 4px; }
.zoom { display: flex; align-items: center; margin-left: 8px; }
.zoom span { width: 36px; }
.zoom input { appearance: none; width: 134px; height: 18px; margin: 0 8px 0 6px; background: linear-gradient(90deg, #71a555 50%, #98989c 50%) center / 100% 2px no-repeat; }
.zoom input::-webkit-slider-thumb { appearance: none; width: 13px; height: 13px; border-radius: 50%; background: #f5f5f5; border: 1px solid #88888c; }
```
